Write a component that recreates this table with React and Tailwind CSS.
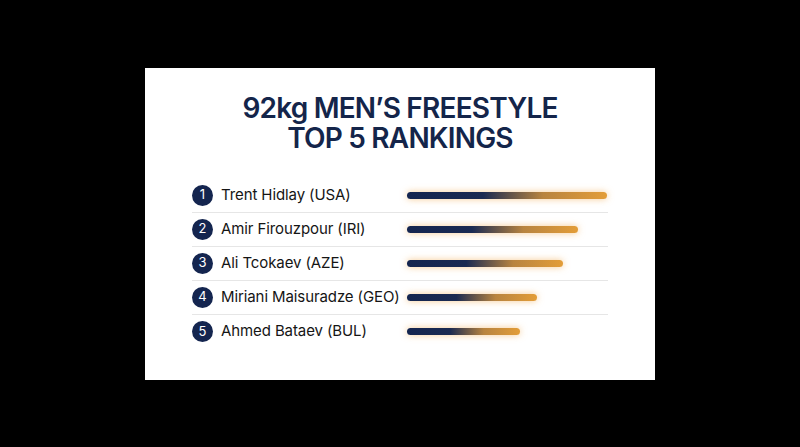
const rankings = [
  { rank: 1, name: 'Trent Hidlay (USA)', pct: 100 },
  { rank: 2, name: 'Amir Firouzpour (IRI)', pct: 85.5 },
  { rank: 3, name: 'Ali Tcokaev (AZE)', pct: 78 },
  { rank: 4, name: 'Miriani Maisuradze (GEO)', pct: 65 },
  { rank: 5, name: 'Ahmed Bataev (BUL)', pct: 56.5 },
];

function RankRow({ rank, name, pct, last }) {
  return (
    <div className={`flex items-center h-[34px] ${last ? '' : 'border-b border-[#e6e6e6]'}`}>
      <div className="w-[215px] flex items-center gap-2 shrink-0">
        <span className="w-[21px] h-[21px] rounded-full bg-[#14254f] text-white text-[13px] flex items-center justify-center">
          {rank}
        </span>
        <span className="text-[15px] text-[#151515] tracking-[-0.1px]">{name}</span>
      </div>
      <div className="flex-1 pr-[1px]">
        <div
          className="h-[7px] rounded-full bg-[linear-gradient(90deg,#14254f_0%,#1a2a52_38%,#b88440_68%,#e39d38_100%)] shadow-[0_0_7px_rgba(240,165,70,0.6)]"
          style={{ width: `${pct}%` }}
        />
      </div>
    </div>
  );
}

export default function App() {
  return (
    <div className="w-[800px] h-[447px] bg-black flex items-center justify-center font-['Inter',sans-serif]">
      <div className="w-[510px] h-[312px] bg-white flex flex-col items-center pt-[25px] px-[47px]">
        <h1 className="text-[28px] leading-[30px] font-semibold text-[#14254a] text-center tracking-[-0.8px]">
          92kg MEN’S FREESTYLE
          <br />
          TOP 5 RANKINGS
        </h1>
        <div className="w-full mt-[26px]">
          {rankings.map((r, i) => (
            <RankRow key={r.rank} {...r} last={i === rankings.length - 1} />
          ))}
        </div>
      </div>
    </div>
  );
}
